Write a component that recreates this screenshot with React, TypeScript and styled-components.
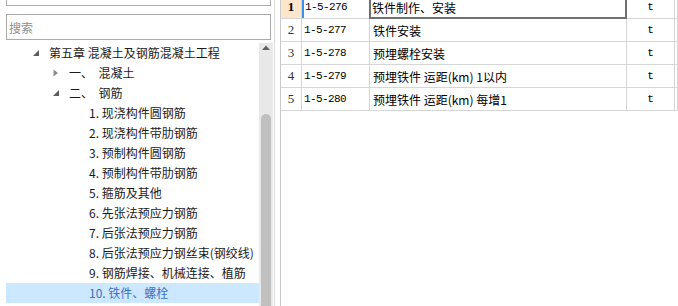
import styled, { createGlobalStyle } from "styled-components";

const GlobalStyle = createGlobalStyle`
    html, body {
        margin: 0;
        padding: 0;
        background: #ffffff;
        overflow: hidden;
    }
    body {
        font-family: "Noto Sans CJK SC", "Noto Sans", sans-serif;
        font-size: 12px;
        color: #1a1a1a;
    }
`;

type TreeItem = {
    level: number;
    label: string;
    arrow?: "open" | "closed";
    selected?: boolean;
};

const tree: TreeItem[] = [
    { level: 0, label: "第五章 混凝土及钢筋混凝土工程", arrow: "open" },
    { level: 1, label: "一、  混凝土", arrow: "closed" },
    { level: 1, label: "二、  钢筋", arrow: "open" },
    { level: 2, label: "1. 现浇构件圆钢筋" },
    { level: 2, label: "2. 现浇构件带肋钢筋" },
    { level: 2, label: "3. 预制构件圆钢筋" },
    { level: 2, label: "4. 预制构件带肋钢筋" },
    { level: 2, label: "5. 箍筋及其他" },
    { level: 2, label: "6. 先张法预应力钢筋" },
    { level: 2, label: "7. 后张法预应力钢筋" },
    { level: 2, label: "8. 后张法预应力钢丝束(钢绞线)" },
    { level: 2, label: "9. 钢筋焊接、机械连接、植筋" },
    { level: 2, label: "10. 铁件、螺栓", selected: true },
];

const rows = [
    { code: "1-5-276", name: "铁件制作、安装", unit: "t" },
    { code: "1-5-277", name: "铁件安装", unit: "t" },
    { code: "1-5-278", name: "预埋螺栓安装", unit: "t" },
    { code: "1-5-279", name: "预埋铁件 运距(km) 1以内", unit: "t" },
    { code: "1-5-280", name: "预埋铁件 运距(km) 每增1", unit: "t" },
];

const Arrow = ({ kind }: { kind?: "open" | "closed" }) => {
    if (kind === "open") {
        return (
            <svg width="12" height="20" viewBox="0 0 12 20">
                <polygon points="9,7 9,13 3,13" fill="#5c5c5c" />
            </svg>
        );
    }
    if (kind === "closed") {
        return (
            <svg width="12" height="20" viewBox="0 0 12 20">
                <polygon points="3.5,6.5 8,10 3.5,13.5" fill="#8c8c8c" />
            </svg>
        );
    }
    return <svg width="12" height="20" />;
};

export default function App() {
    return (
        <>
            <GlobalStyle />
            <Page>
                <LeftPanel>
                    <TopBox />
                    <SearchBox placeholder="搜索" />
                    <TreeArea>
                        <TreeList>
                            {tree.map((item, i) => (
                                <TreeRow key={i} $level={item.level} $selected={item.selected}>
                                    <Arrow kind={item.arrow} />
                                    <TreeLabel>{item.label}</TreeLabel>
                                </TreeRow>
                            ))}
                        </TreeList>
                        <ScrollBar>
                            <ScrollUp>
                                <svg width="8" height="5" viewBox="0 0 8 5">
                                    <polygon points="0,5 4,0.5 8,5" fill="#606060" />
                                </svg>
                            </ScrollUp>
                            <Thumb />
                        </ScrollBar>
                    </TreeArea>
                </LeftPanel>
                <RightPanel>
                    <Table>
                        {rows.map((r, i) => (
                            <Row key={r.code}>
                                <RowHead $active={i === 0}>{i + 1}</RowHead>
                                <CodeCell $active={i === 0}>{r.code}</CodeCell>
                                <NameCell $current={i === 0}>{r.name}</NameCell>
                                <UnitCell>{r.unit}</UnitCell>
                                <RestCell />
                            </Row>
                        ))}
                    </Table>
                </RightPanel>
            </Page>
        </>
    );
}

const Page = styled.div`
    display: flex;
    width: 678px;
    height: 306px;
    overflow: hidden;
`;

const LeftPanel = styled.div`
    width: 274px;
    flex-shrink: 0;
    border-right: 1px solid #dadada;
    display: flex;
    flex-direction: column;
    padding-left: 6px;
    box-sizing: border-box;
    width: 275px;
`;

const TopBox = styled.div`
    width: 265px;
    height: 6px;
    box-sizing: border-box;
    border: 1px solid #ababab;
    border-top: none;
`;

const SearchBox = styled.input`
    margin-top: 8px;
    width: 265px;
    height: 26px;
    box-sizing: border-box;
    border: 1px solid #ababab;
    padding: 0 2px;
    font-family: "Noto Sans CJK SC", sans-serif;
    font-size: 12px;
    outline: none;
    &::placeholder {
        color: #8e8e8e;
    }
`;

const TreeArea = styled.div`
    margin-top: 3px;
    flex: 1;
    display: flex;
    width: 267px;
    overflow: hidden;
`;

const TreeList = styled.div`
    flex: 1;
    display: flex;
    flex-direction: column;
`;

const TreeRow = styled.div<{ $level: number; $selected?: boolean }>`
    height: 20px;
    flex-shrink: 0;
    display: flex;
    align-items: center;
    padding-left: ${(p) => 24 + p.$level * 20}px;
    gap: 7px;
    background: ${(p) => (p.$selected ? "#cce8ff" : "transparent")};
    color: ${(p) => (p.$selected ? "#3e6fc4" : "#1a1a1a")};
    svg {
        flex-shrink: 0;
    }
`;

const TreeLabel = styled.span`
    white-space: pre;
    line-height: 20px;
`;

const ScrollBar = styled.div`
    width: 14px;
    flex-shrink: 0;
    background: #e8e8e8;
    display: flex;
    flex-direction: column;
    align-items: center;
`;

const ScrollUp = styled.div`
    height: 14px;
    display: flex;
    align-items: center;
    justify-content: center;
    padding-bottom: 6px;
    box-sizing: border-box;
`;

const Thumb = styled.div`
    margin-top: 57px;
    width: 10px;
    flex: 1;
    background: #c0c0c0;
    border-radius: 5px 5px 0 0;
`;

const RightPanel = styled.div`
    margin-left: 5px;
    flex: 1;
    border-left: 1px solid #c9c9c9;
    overflow: hidden;
`;

const Table = styled.div`
    margin-top: -4px;
    display: flex;
    flex-direction: column;
    font-size: 12px;
    color: #000;
`;

const Row = styled.div`
    display: grid;
    grid-template-columns: 21px 68px 257px 48px 1fr;
    height: 23px;
`;

const Cell = styled.div`
    box-sizing: border-box;
    border-right: 1px solid #d6d6d6;
    border-bottom: 1px solid #d6d6d6;
    display: flex;
    align-items: center;
    white-space: pre;
    overflow: hidden;
`;

const RowHead = styled(Cell)<{ $active?: boolean }>`
    justify-content: center;
    font-family: "Liberation Serif", "DejaVu Serif", serif;
    font-size: 13px;
    font-weight: ${(p) => (p.$active ? 700 : 400)};
    background: ${(p) => (p.$active ? "#fde6cb" : "#ffffff")};
    color: ${(p) => (p.$active ? "#000" : "#333")};
`;

const CodeCell = styled(Cell)<{ $active?: boolean }>`
    padding-left: 2px;
    font-family: "Liberation Mono", "DejaVu Sans Mono", monospace;
    font-size: 11px;
    letter-spacing: -0.6px;
    box-shadow: ${(p) => (p.$active ? "inset 2px 0 0 #3c8ee8" : "none")};
    padding-left: ${(p) => (p.$active ? 3 : 2)}px;
`;

const NameCell = styled(Cell)<{ $current?: boolean }>`
    padding-left: 3px;
    border: ${(p) => (p.$current ? "2px solid #707070" : "none")};
    border-right: ${(p) => (p.$current ? "2px solid #707070" : "1px solid #d6d6d6")};
    border-bottom: ${(p) => (p.$current ? "2px solid #707070" : "1px solid #d6d6d6")};
    padding-left: ${(p) => (p.$current ? 1 : 3)}px;
    margin-left: ${(p) => (p.$current ? -1 : 0)}px;
`;

const UnitCell = styled(Cell)`
    justify-content: center;
    font-family: "Liberation Mono", "DejaVu Sans Mono", monospace;
    font-size: 11px;
`;

const RestCell = styled(Cell)``;
